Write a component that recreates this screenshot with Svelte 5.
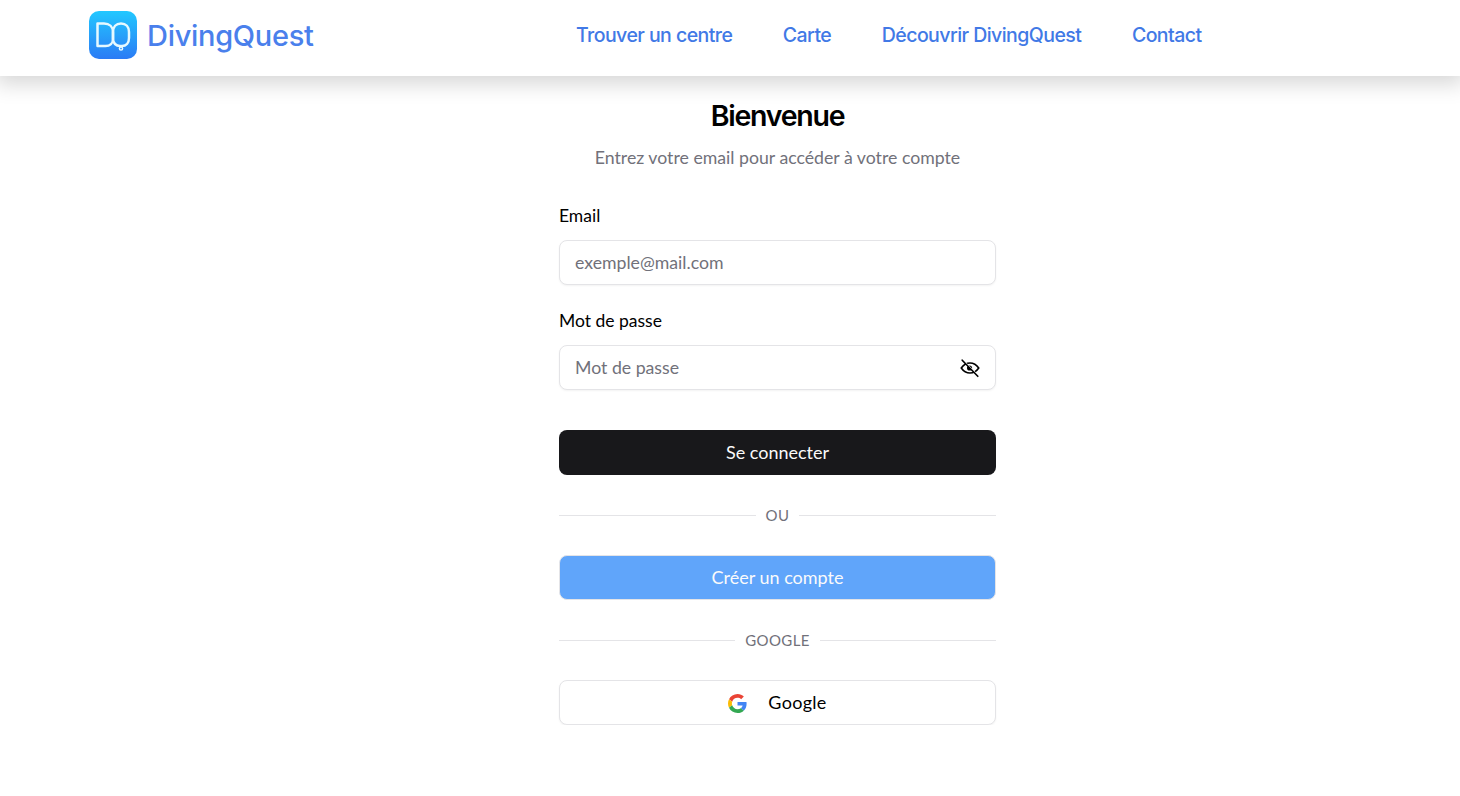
<script>
    const links = ['Trouver un centre', 'Carte', 'Découvrir DivingQuest', 'Contact']
</script>

<header class="topbar">
    <a class="brand" href="#top">
        <svg class="logo" viewBox="0 0 48 48" width="48" height="48" aria-hidden="true">
            <defs>
                <linearGradient id="logo-bg" x1="0" y1="0" x2="0" y2="1">
                    <stop offset="0" stop-color="#22c8ff"/>
                    <stop offset="1" stop-color="#2b7bf5"/>
                </linearGradient>
            </defs>
            <rect width="48" height="48" rx="10" fill="url(#logo-bg)"/>
            <path d="M8.500 12.500H15C20.500 12.500 24 16 24 21V28C24 32 21 35 16.500 35H8.500Z" fill="none" stroke="#e6f9ff" stroke-width="2.500" stroke-linejoin="round"/>
            <path d="M24 21C24 16 27 12.500 32 12.500S40 16 40 21V27C40 32 37 35 33 35H31C27 35 24 32 24 28Z" fill="none" stroke="#e6f9ff" stroke-width="2.500" stroke-linejoin="round"/>
            <circle cx="32" cy="37.500" r="1.600" fill="none" stroke="#e6f9ff" stroke-width="1.500"/>
        </svg>
        <span class="brand-name">DivingQuest</span>
    </a>
    <nav class="links">
        {#each links as link}
            <a href="#top">{link}</a>
        {/each}
    </nav>
</header>

<main class="page">
    <form class="card" onsubmit={(e) => e.preventDefault()}>
        <h1>Bienvenue</h1>
        <p class="intro">Entrez votre email pour accéder à votre compte</p>

        <label for="email">Email</label>
        <input id="email" type="email" placeholder="exemple@mail.com"/>

        <label class="second" for="password">Mot de passe</label>
        <div class="password">
            <input id="password" type="password" placeholder="Mot de passe"/>
            <svg class="eye" viewBox="0 0 24 24" width="22" height="22" aria-hidden="true">
                <path d="M2.500 12c2.500-3.700 5.800-5.500 9.500-5.500s7 1.800 9.500 5.500c-2.500 3.700-5.800 5.500-9.500 5.500s-7-1.800-9.500-5.500z" fill="none" stroke="#000" stroke-width="1.800"/>
                <circle cx="11.500" cy="12" r="2.800" fill="#000"/>
                <path d="M4.500 3.500l17 17.500" stroke="#fff" stroke-width="1.200"/>
                <path d="M3.500 3.500l17 17.500" stroke="#000" stroke-width="1.800" stroke-linecap="round"/>
            </svg>
        </div>

        <button class="btn dark" type="submit">Se connecter</button>

        <div class="divider"><span>OU</span></div>

        <button class="btn blue" type="button">Créer un compte</button>

        <div class="divider"><span>GOOGLE</span></div>

        <button class="btn outline" type="button">
            <svg viewBox="0 0 48 48" width="19" height="19" aria-hidden="true">
                <path fill="#EA4335" d="M24 9.500c3.540 0 6.710 1.220 9.210 3.600l6.850-6.850C35.900 2.380 30.470 0 24 0 14.620 0 6.510 5.380 2.560 13.220l7.980 6.190C12.430 13.720 17.740 9.500 24 9.500z"/>
                <path fill="#4285F4" d="M46.980 24.550c0-1.570-.15-3.090-.38-4.550H24v9.020h12.940c-.58 2.960-2.260 5.480-4.780 7.180l7.730 6c4.510-4.180 7.090-10.360 7.090-17.650z"/>
                <path fill="#FBBC05" d="M10.530 28.590c-.48-1.450-.76-2.990-.76-4.590s.27-3.140.76-4.590l-7.980-6.190C.92 16.460 0 20.120 0 24c0 3.880.92 7.540 2.560 10.780l7.970-6.190z"/>
                <path fill="#34A853" d="M24 48c6.480 0 11.930-2.130 15.890-5.810l-7.730-6c-2.150 1.450-4.920 2.300-8.160 2.300-6.260 0-11.570-4.220-13.470-9.910l-7.980 6.190C6.510 42.620 14.620 48 24 48z"/>
            </svg>
            <span>Google</span>
        </button>
    </form>
</main>

<style>
    :global(body) {
        background: #fff;
        color: #000;
        font-family: 'Lato', 'Open Sans', sans-serif;
    }

    .topbar {
        height: 76px;
        box-sizing: border-box;
        display: flex;
        align-items: center;
        padding-left: 89px;
        background: #fff;
        box-shadow: 0 4px 20px 4px rgba(0, 0, 0, .16);
    }

    .brand {
        display: flex;
        align-items: center;
        gap: 10px;
        width: 487px;
        text-decoration: none;
    }

    .logo {
        margin-top: -6px;
    }

    .brand-name {
        margin-top: -6px;
        font-family: 'Inter', sans-serif;
        font-size: 29px;
        font-weight: 500;
        letter-spacing: -.3px;
        color: #4a80ec;
    }

    .links {
        display: flex;
        gap: 50.500px;
        margin-top: -6px;
    }

    .links a {
        font-family: 'Inter', sans-serif;
        font-size: 19.500px;
        font-weight: 500;
        letter-spacing: -.550px;
        color: #4179e6;
        text-decoration: none;
    }

    .page {
        display: flex;
        justify-content: center;
        padding: 24px 0 0 95px;
    }

    .card {
        width: 437px;
        display: flex;
        flex-direction: column;
    }

    h1 {
        margin: 0;
        text-align: center;
        font-family: 'Inter', sans-serif;
        font-size: 28.500px;
        line-height: 32px;
        font-weight: 600;
        letter-spacing: -1.250px;
    }

    .intro {
        margin: 14px 0 0;
        text-align: center;
        font-size: 17.700px;
        line-height: 24px;
        color: #71717a;
    }

    label {
        margin-top: 34px;
        margin-bottom: 12px;
        font-size: 17.500px;
        line-height: 24px;
    }

    label.second {
        margin-top: 24px;
    }

    input {
        width: 100%;
        height: 45px;
        box-sizing: border-box;
        padding: 0 15px;
        border: 1px solid #e4e4e7;
        border-radius: 8px;
        box-shadow: 0 1px 2px rgba(0, 0, 0, .05);
        font: inherit;
        font-size: 17.700px;
        outline: none;
    }

    input::placeholder {
        color: #71717a;
        opacity: 1;
    }

    .password {
        position: relative;
    }

    .eye {
        position: absolute;
        right: 15px;
        top: 12px;
    }

    .btn {
        width: 100%;
        height: 45px;
        padding-bottom: 3px;
        border-radius: 8px;
        font: inherit;
        font-size: 18px;
        cursor: pointer;
    }

    .dark {
        margin-top: 40px;
        border: 0;
        background: #18181b;
        color: #fafafa;
    }

    .blue {
        border: 1px solid #e4e4e7;
        background: #60a5fa;
        color: #fafafa;
    }

    .outline {
        display: flex;
        align-items: center;
        justify-content: center;
        gap: 21px;
        padding-right: 6px;
        border: 1px solid #e4e4e7;
        background: #fff;
        color: #000;
        box-shadow: 0 1px 2px rgba(0, 0, 0, .05);
    }

    .outline svg {
        margin-top: 3px;
    }

    .outline span {
        letter-spacing: .3px;
    }

    .divider {
        display: flex;
        align-items: center;
        gap: 10px;
        height: 80px;
        font-size: 15px;
        letter-spacing: .4px;
        color: #71717a;
    }

    .divider::before,
    .divider::after {
        content: '';
        flex: 1;
        height: 1px;
        background: #e4e4e7;
    }
</style>
